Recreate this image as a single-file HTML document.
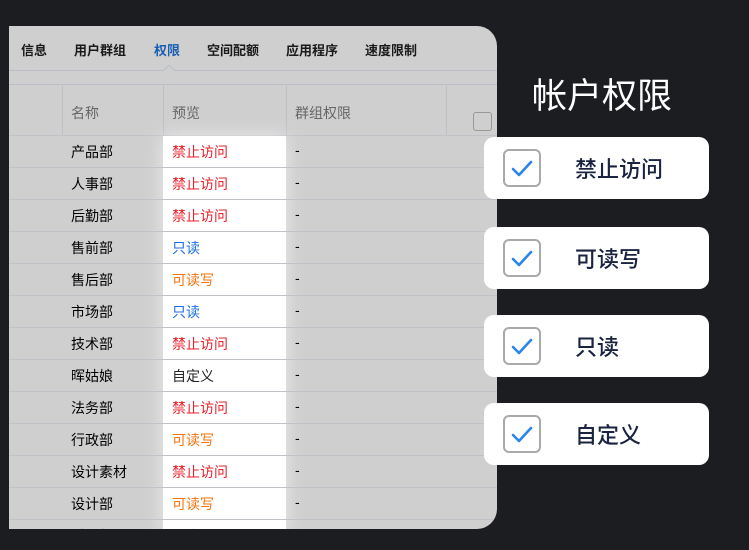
<!DOCTYPE html>
<html><head><meta charset="utf-8"><style>
*{margin:0;padding:0;box-sizing:border-box}
body{width:749px;height:550px;background:#1c1d21;position:relative;overflow:hidden;font-family:"Liberation Sans","Noto Sans CJK SC",sans-serif}
.panel{position:absolute;left:9px;top:26px;width:488px;height:503px;background:#cfcfcf;border-radius:0 20px 20px 0;overflow:hidden}
.t{position:absolute;font-size:13px;color:#1a1a1a;font-weight:bold;top:14px}
.abs{position:absolute}
.row{position:absolute;left:0;width:488px;height:32px;border-bottom:1px solid #bfc3c8}
.row span{position:absolute;top:6px;font-size:14px}
.white{position:absolute;left:154px;top:110px;width:123px;height:400px;background:#fff;box-shadow:0 0 18px rgba(255,255,255,.6)}
.card{position:absolute;left:484px;width:225px;height:62px;background:#fff;border-radius:10px}
.cb{position:absolute;left:19px;top:12px;width:38px;height:38px;border:2px solid #a9a9a9;border-radius:6px}
.card span{position:absolute;left:91px;top:15px;font-size:22px;color:#1a2340;font-weight:500}
</style></head><body>
<div class="panel">
 <div class="t" style="left:12px">信息</div>
 <div class="t" style="left:65px">用户群组</div>
 <div class="t" style="left:145px;color:#1a5fb4">权限</div>
 <div class="t" style="left:198px">空间配额</div>
 <div class="t" style="left:277px">应用程序</div>
 <div class="t" style="left:356px">速度限制</div>
 <div class="abs" style="left:0;top:44px;width:488px;border-top:1px solid #b9bec4"></div>
 <div class="abs" style="left:156px;top:40px;width:8px;height:8px;transform:rotate(45deg);border-left:1px solid #b9bec4;border-top:1px solid #b9bec4;background:#cfcfcf"></div>
 <div class="abs" style="left:0;top:58px;width:488px;border-top:1px solid #b9bec4"></div>
 <div class="abs" style="left:53px;top:58px;height:52px;border-left:1px solid #bcc1c6"></div>
 <div class="abs" style="left:154px;top:58px;height:52px;border-left:1px solid #bcc1c6"></div>
 <div class="abs" style="left:277px;top:58px;height:52px;border-left:1px solid #bcc1c6"></div>
 <div class="abs" style="left:437px;top:58px;height:52px;border-left:1px solid #bcc1c6"></div>
 <div class="abs" style="left:62px;top:77px;font-size:14px;color:#666">名称</div>
 <div class="abs" style="left:163px;top:77px;font-size:14px;color:#666">预览</div>
 <div class="abs" style="left:286px;top:77px;font-size:14px;color:#666">群组权限</div>
 <div class="abs" style="left:464px;top:86px;width:19px;height:19px;border:1px solid #999;border-radius:3px"></div>
 <div class="abs" style="left:0;top:109px;width:488px;border-top:1px solid #bfc3c8"></div>
 <div class="white"></div>
 <div class="row" style="top:110px"><span style="left:62px">产品部</span><span style="left:163px;color:#e8202a">禁止访问</span><span style="left:286px">-</span></div>
 <div class="row" style="top:142px"><span style="left:62px">人事部</span><span style="left:163px;color:#e8202a">禁止访问</span><span style="left:286px">-</span></div>
 <div class="row" style="top:174px"><span style="left:62px">后勤部</span><span style="left:163px;color:#e8202a">禁止访问</span><span style="left:286px">-</span></div>
 <div class="row" style="top:206px"><span style="left:62px">售前部</span><span style="left:163px;color:#1a6fe0">只读</span><span style="left:286px">-</span></div>
 <div class="row" style="top:238px"><span style="left:62px">售后部</span><span style="left:163px;color:#f5730a">可读写</span><span style="left:286px">-</span></div>
 <div class="row" style="top:270px"><span style="left:62px">市场部</span><span style="left:163px;color:#1a6fe0">只读</span><span style="left:286px">-</span></div>
 <div class="row" style="top:302px"><span style="left:62px">技术部</span><span style="left:163px;color:#e8202a">禁止访问</span><span style="left:286px">-</span></div>
 <div class="row" style="top:334px"><span style="left:62px">晖姑娘</span><span style="left:163px;color:#222">自定义</span><span style="left:286px">-</span></div>
 <div class="row" style="top:366px"><span style="left:62px">法务部</span><span style="left:163px;color:#e8202a">禁止访问</span><span style="left:286px">-</span></div>
 <div class="row" style="top:398px"><span style="left:62px">行政部</span><span style="left:163px;color:#f5730a">可读写</span><span style="left:286px">-</span></div>
 <div class="row" style="top:430px"><span style="left:62px">设计素材</span><span style="left:163px;color:#e8202a">禁止访问</span><span style="left:286px">-</span></div>
 <div class="row" style="top:462px"><span style="left:62px">设计部</span><span style="left:163px;color:#f5730a">可读写</span><span style="left:286px">-</span></div>
 <div class="row" style="top:494px"><span style="left:62px">财务部</span><span style="left:163px;color:#e8202a">禁止访问</span></div>
</div>
<div class="abs" style="left:532px;top:68px;font-size:35px;color:#fff">帐户权限</div>
<div class="card" style="top:137px"><div class="cb"><svg width="34" height="34" viewBox="0 0 34 34" style="position:absolute;left:0;top:0"><path d="M8 18l6 6 12-13" fill="none" stroke="#2a84f0" stroke-width="2.6" stroke-linecap="round" stroke-linejoin="round"/></svg></div><span>禁止访问</span></div>
<div class="card" style="top:227px"><div class="cb"><svg width="34" height="34" viewBox="0 0 34 34" style="position:absolute;left:0;top:0"><path d="M8 18l6 6 12-13" fill="none" stroke="#2a84f0" stroke-width="2.6" stroke-linecap="round" stroke-linejoin="round"/></svg></div><span>可读写</span></div>
<div class="card" style="top:315px"><div class="cb"><svg width="34" height="34" viewBox="0 0 34 34" style="position:absolute;left:0;top:0"><path d="M8 18l6 6 12-13" fill="none" stroke="#2a84f0" stroke-width="2.6" stroke-linecap="round" stroke-linejoin="round"/></svg></div><span>只读</span></div>
<div class="card" style="top:403px"><div class="cb"><svg width="34" height="34" viewBox="0 0 34 34" style="position:absolute;left:0;top:0"><path d="M8 18l6 6 12-13" fill="none" stroke="#2a84f0" stroke-width="2.6" stroke-linecap="round" stroke-linejoin="round"/></svg></div><span>自定义</span></div>
</body></html>
